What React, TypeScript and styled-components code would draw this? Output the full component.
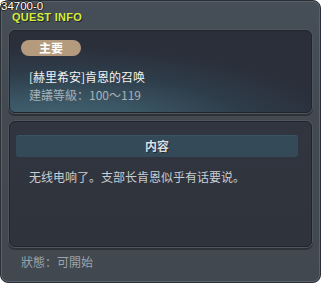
import React from "react";
import styled, { createGlobalStyle } from "styled-components";

const Global = createGlobalStyle`
  html, body { margin: 0; padding: 0; background: #ffffff; }
  body { font-family: "Noto Sans CJK SC", "Noto Sans", sans-serif; }
`;

const Frame = styled.div`
  box-sizing: border-box;
  width: 321px;
  height: 283px;
  border-radius: 8px;
  background: linear-gradient(180deg, #464e57 0%, #424951 40%, #41484f 100%);
  border: 1px solid #2b3036;
  box-shadow: inset 0 0 0 1px #59616a;
  display: flex;
  flex-direction: column;
  padding: 0 8px 0 8px;
  position: relative;
`;

const Header = styled.div`
  height: 29px;
  display: flex;
  flex-direction: column;
`;

const IdTag = styled.div`
  position: absolute;
  left: 0;
  top: 0;
  height: 11px;
  font-family: "Liberation Sans", sans-serif;
  font-size: 11.5px;
  line-height: 11px;
  color: #ffffff;
  text-shadow: 1px 0 0 #222, -1px 0 0 #222, 0 1px 0 #222, 0 -1px 0 #222;
`;

const Title = styled.div`
  margin-top: 11px;
  margin-left: 3px;
  font-family: "Liberation Sans", sans-serif;
  font-weight: bold;
  font-size: 11px;
  line-height: 10px;
  letter-spacing: 0.3px;
  color: #d6ec3a;
  text-shadow: 1px 1px 0 #1e2328;
`;

const Panel = styled.div<{ $h: number; $top: number; $variant: "quest" | "content" }>`
  box-sizing: border-box;
  height: ${(p) => p.$h}px;
  margin-top: ${(p) => p.$top}px;
  border-radius: 6px;
  border: 1px solid #20252c;
  box-shadow: 0 0 0 1px #4d555e, 0 2px 0 1px #2d3238;
  background: ${(p) =>
    p.$variant === "quest"
      ? "radial-gradient(ellipse 95% 100% at 15% 118%, #46697a 0%, #3a5563 35%, #2e3c49 68%, #2a2f3a 100%)"
      : "linear-gradient(180deg, #30353f 0%, #2e333c 100%)"};
  display: flex;
  flex-direction: column;
`;

const QuestBody = styled.div`
  padding: 9px 12px 0 11px;
  display: flex;
  flex-direction: column;
`;

const Badge = styled.div`
  width: 60px;
  height: 16px;
  border-radius: 8px;
  background: #b49b7e;
  color: #ffffff;
  font-weight: bold;
  font-size: 12px;
  line-height: 16px;
  text-align: center;
`;

const QuestName = styled.div`
  margin-top: 13px;
  margin-left: 8px;
  font-size: 12px;
  line-height: 16px;
  color: #f2f4f5;
`;

const Level = styled.div`
  margin-top: 2px;
  margin-left: 8px;
  font-size: 12px;
  line-height: 16px;
  color: #a5b1b9;
`;

const ContentBody = styled.div`
  padding: 13px 13px 0 6px;
  display: flex;
  flex-direction: column;
`;

const SectionBar = styled.div`
  height: 22px;
  border-radius: 3px;
  background: #344a59;
  box-shadow: inset 0 1px 0 #3a5261;
  color: #d9dfe3;
  font-weight: bold;
  font-size: 12px;
  line-height: 22px;
  text-align: center;
  text-shadow: 1px 1px 0 #1f2a32;
`;

const Desc = styled.div`
  margin-top: 12px;
  margin-left: 13px;
  font-size: 12px;
  line-height: 16px;
  color: #c8ced3;
`;

const Status = styled.div`
  margin-top: 7px;
  margin-left: 12px;
  font-size: 12px;
  line-height: 16px;
  color: #9ba4ab;
`;

export default function App() {
  return (
    <>
      <Global />
      <Frame>
        <IdTag>34700-0</IdTag>
        <Header>
          <Title>QUEST INFO</Title>
        </Header>
        <Panel $h={83} $top={0} $variant="quest">
          <QuestBody>
            <Badge>主要</Badge>
            <QuestName>[赫里希安]肯恩的召唤</QuestName>
            <Level>建議等級：100～119</Level>
          </QuestBody>
        </Panel>
        <Panel $h={126} $top={8} $variant="content">
          <ContentBody>
            <SectionBar>内容</SectionBar>
            <Desc>无线电响了。支部长肯恩似乎有话要说。</Desc>
          </ContentBody>
        </Panel>
        <Status>狀態：可開始</Status>
      </Frame>
    </>
  );
}
